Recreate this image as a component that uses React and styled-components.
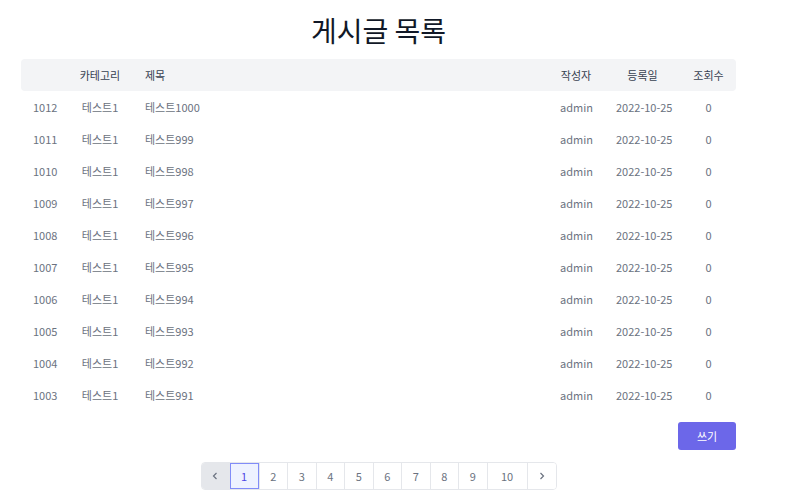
import styled, { createGlobalStyle } from "styled-components"

const GlobalStyle = createGlobalStyle`
    body {
        margin: 0;
        font-family: "Noto Sans CJK KR", "Noto Sans", sans-serif;
        background: #fff;
    }
`;

const Container = styled.div`
    width: 715px;
    margin-left: 21px;
    padding-top: 10px;
`;

const Title = styled.h1`
    margin: 0 0 9px;
    font-size: 28px;
    font-weight: 400;
    line-height: 40px;
    text-align: center;
    color: #111827;
`;

const Table = styled.table`
    width: 100%;
    border-collapse: collapse;
    table-layout: fixed;
    font-size: 11px;
`;

const HeadRow = styled.tr`
    background: #f3f4f6;
    th:first-child { border-radius: 4px 0 0 4px; }
    th:last-child { border-radius: 0 4px 4px 0; }
`;

const Th = styled.th`
    height: 32px;
    padding: 0 12px;
    font-weight: 400;
    color: #374151;
    white-space: nowrap;
    text-align: ${(p) => p.$align || "center"};
`;

const Td = styled.td`
    height: 32px;
    padding: 0 12px;
    color: #6b7280;
    white-space: nowrap;
    text-align: ${(p) => p.$align || "center"};
`;

const Actions = styled.div`
    display: flex;
    justify-content: flex-end;
    margin-top: 11px;
`;

const WriteButton = styled.button`
    width: 58px;
    height: 28px;
    border: none;
    border-radius: 3px;
    background: #6c67e9;
    color: #fff;
    font-family: inherit;
    font-size: 11px;
`;

const PagerWrap = styled.div`
    display: flex;
    justify-content: center;
    margin-top: 12px;
`;

const Pager = styled.div`
    display: flex;
    border: 1px solid #e5e7eb;
    border-radius: 4px;
    overflow: hidden;
`;

const PageCell = styled.div`
    box-sizing: border-box;
    display: flex;
    align-items: center;
    justify-content: center;
    width: ${(p) => (p.$wide ? "40px" : p.$active ? "30px" : "28.5px")};
    height: 26px;
    font-size: 11px;
    color: ${(p) => (p.$active ? "#4f46e5" : "#6b7280")};
    background: ${(p) => (p.$active ? "#eef2ff" : p.$muted ? "#e5e7eb" : "#fff")};
    border-left: 1px solid #e5e7eb;
    box-shadow: ${(p) => (p.$active ? "inset 0 0 0 1px #818cf8" : "none")};
    &:first-child { border-left: none; width: 27px; }
    &:last-child { width: 29px; }
`;

const Chevron = ({ dir }) => (
    <svg width="10" height="10" viewBox="0 0 10 10" fill="none" stroke="#6b7280" strokeWidth="1.2">
        <path d={dir === "left" ? "M6.5 2 L3.5 5 L6.5 8" : "M3.5 2 L6.5 5 L3.5 8"} />
    </svg>
);

const posts = Array.from({ length: 10 }, (_, i) => ({
    id: 1012 - i,
    category: "테스트1",
    title: "테스트" + (1000 - i),
    writer: "admin",
    date: "2022-10-25",
    views: 0,
}));

const App = () => {
    return (
        <Container>
            <GlobalStyle />
            <Title>게시글 목록</Title>
            <Table>
                <colgroup>
                    <col style={{ width: 46 }} />
                    <col style={{ width: 66 }} />
                    <col />
                    <col style={{ width: 56 }} />
                    <col style={{ width: 77 }} />
                    <col style={{ width: 55 }} />
                </colgroup>
                <thead>
                    <HeadRow>
                        <Th></Th>
                        <Th>카테고리</Th>
                        <Th $align="left">제목</Th>
                        <Th>작성자</Th>
                        <Th>등록일</Th>
                        <Th>조회수</Th>
                    </HeadRow>
                </thead>
                <tbody>
                    {posts.map((p) => (
                        <tr key={p.id}>
                            <Td>{p.id}</Td>
                            <Td>{p.category}</Td>
                            <Td $align="left">{p.title}</Td>
                            <Td>{p.writer}</Td>
                            <Td>{p.date}</Td>
                            <Td>{p.views}</Td>
                        </tr>
                    ))}
                </tbody>
            </Table>
            <Actions>
                <WriteButton>쓰기</WriteButton>
            </Actions>
            <PagerWrap>
                <Pager>
                    <PageCell $muted><Chevron dir="left" /></PageCell>
                    {[1, 2, 3, 4, 5, 6, 7, 8, 9, 10].map((n) => (
                        <PageCell key={n} $active={n === 1} $wide={n === 10}>{n}</PageCell>
                    ))}
                    <PageCell><Chevron dir="right" /></PageCell>
                </Pager>
            </PagerWrap>
        </Container>
    )
}

export default App;
